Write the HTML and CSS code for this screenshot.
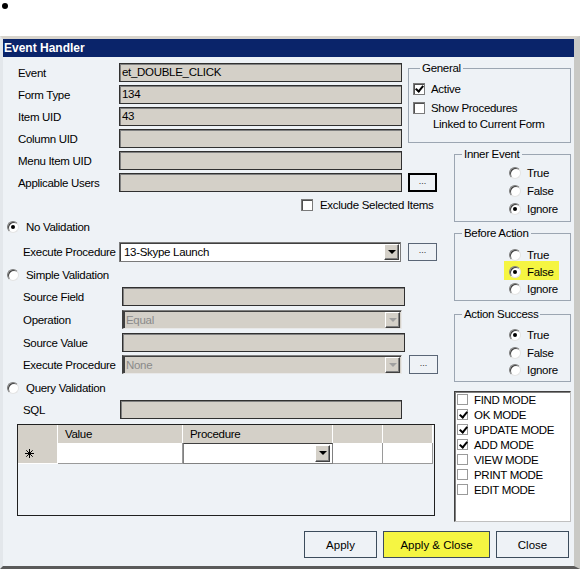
FILE: index.html
```html
<!DOCTYPE html>
<html lang="en">
<head>
    <meta charset="UTF-8">
    <title>Event Handler</title>
    <link rel="stylesheet" href="styles.css">
</head>
<body>
    <div class="dot"></div>

    <div class="window">
        <div class="title">Event Handler</div>

        <div class="content">
            <div class="columns">
                <!-- left side: event fields and validation -->
                <div class="main">
                    <div class="field"><label>Event</label><div class="box">et_DOUBLE_CLICK</div></div>
                    <div class="field"><label>Form Type</label><div class="box">134</div></div>
                    <div class="field"><label>Item UID</label><div class="box">43</div></div>
                    <div class="field"><label>Column UID</label><div class="box"></div></div>
                    <div class="field"><label>Menu Item UID</label><div class="box"></div></div>
                    <div class="field"><label>Applicable Users</label><div class="box"></div><button class="more focus">...</button></div>

                    <div class="exclude"><span class="check"></span>Exclude Selected Items</div>

                    <div class="option opt-none"><span class="radio on"></span>No Validation</div>
                    <div class="field proc"><label>Execute Procedure</label>
                        <div class="combo"><span>13-Skype Launch</span><i class="arrow"></i></div>
                        <button class="more">...</button>
                    </div>

                    <div class="option opt-simple"><span class="radio"></span>Simple Validation</div>
                    <div class="field wide f-source"><label>Source Field</label><div class="box"></div></div>
                    <div class="field wide f-op"><label>Operation</label><div class="combo off"><span>Equal</span><i class="arrow"></i></div></div>
                    <div class="field wide f-value"><label>Source Value</label><div class="box"></div></div>
                    <div class="field wide f-exec"><label>Execute Procedure</label>
                        <div class="combo off"><span>None</span><i class="arrow"></i></div>
                        <button class="more">...</button>
                    </div>

                    <div class="option opt-query"><span class="radio"></span>Query Validation</div>
                    <div class="field sql"><label>SQL</label><div class="box"></div></div>

                    <div class="grid">
                        <div class="grid-row head">
                            <div class="cell"></div>
                            <div class="cell">Value</div>
                            <div class="cell">Procedure</div>
                            <div class="cell"></div>
                            <div class="cell"></div>
                        </div>
                        <div class="grid-row">
                            <div class="cell rowhead">
                                <svg width="9" height="9" viewBox="0 0 9 9">
                                    <path d="M4.5 0V9M0 4.5H9M1.3 1.3L7.7 7.7M7.7 1.3L1.3 7.7" stroke="#000" stroke-width="1"/>
                                </svg>
                            </div>
                            <div class="cell"></div>
                            <div class="cell pick"><i class="arrow"></i></div>
                            <div class="cell"></div>
                            <div class="cell"></div>
                        </div>
                    </div>
                </div>

                <!-- right side: flags and modes -->
                <div class="side">
                    <fieldset class="group general">
                        <legend>General</legend>
                        <div class="flag flag-active"><span class="check on"></span>Active</div>
                        <div class="flag flag-show"><span class="check"></span>Show Procedures</div>
                        <div class="flag-note">Linked to Current Form</div>
                    </fieldset>

                    <fieldset class="group inner">
                        <legend>Inner Event</legend>
                        <div class="choice"><span class="radio"></span>True</div>
                        <div class="choice"><span class="radio"></span>False</div>
                        <div class="choice"><span class="radio on"></span>Ignore</div>
                    </fieldset>

                    <fieldset class="group before">
                        <legend>Before Action</legend>
                        <div class="choice"><span class="radio"></span>True</div>
                        <div class="choice"><span class="hl"><span class="radio on"></span>False</span></div>
                        <div class="choice"><span class="radio"></span>Ignore</div>
                    </fieldset>

                    <fieldset class="group success">
                        <legend>Action Success</legend>
                        <div class="choice"><span class="radio on"></span>True</div>
                        <div class="choice"><span class="radio"></span>False</div>
                        <div class="choice"><span class="radio"></span>Ignore</div>
                    </fieldset>

                    <div class="modes">
                        <div class="mode"><span class="check"></span>FIND MODE</div>
                        <div class="mode"><span class="check on"></span>OK MODE</div>
                        <div class="mode"><span class="check on"></span>UPDATE MODE</div>
                        <div class="mode"><span class="check on"></span>ADD MODE</div>
                        <div class="mode"><span class="check"></span>VIEW MODE</div>
                        <div class="mode"><span class="check"></span>PRINT MODE</div>
                        <div class="mode"><span class="check"></span>EDIT MODE</div>
                    </div>
                </div>
            </div>

            <div class="actions">
                <button class="btn">Apply</button>
                <button class="btn btn-main">Apply &amp; Close</button>
                <button class="btn">Close</button>
            </div>
        </div>
    </div>
</body>
</html>
```

FILE: styles.css
```css
* {
    box-sizing: border-box;
}

body {
    margin: 0;
    background: #fff;
    font-family: "Liberation Sans", Arial, sans-serif;
    font-size: 11.5px;
    letter-spacing: -0.3px;
    color: #000;
}

.dot {
    width: 6px;
    height: 6px;
    margin: 3px 0 0 2px;
    border-radius: 50%;
    background: #000;
}

.window {
    width: 580px;
    margin-top: 27px;
    border-top: 3px solid #d8d4cc;
    border-left: 3px solid #e3e7eb;
    border-right: 6px solid #c9c9c5;
    border-bottom: 3px solid #5a5a5a;
}

.title {
    height: 18px;
    line-height: 18px;
    padding-left: 1px;
    background: #0a246a;
    color: #fff;
    font-weight: bold;
    font-size: 12px;
    letter-spacing: 0;
}

.content {
    height: 509px;
    background: #eef2f6;
}

.columns {
    display: flex;
    height: 465px;
}

/* ---------- left column ---------- */

.main {
    width: 451px;
    padding: 6px 0 0 15px;
}

.field {
    display: flex;
    align-items: center;
    height: 19px;
}

.field + .field {
    margin-top: 3px;
}

.field label {
    width: 101px;
    white-space: nowrap;
}

.box {
    width: 283px;
    height: 19px;
    line-height: 17px;
    padding-left: 2px;
    background: #d4d0c8;
    border: 1px solid #303030;
    box-shadow: inset 1px 1px 0 #808080;
    white-space: nowrap;
}

.combo {
    display: flex;
    align-items: center;
    justify-content: space-between;
    width: 282px;
    height: 20px;
    padding: 0 1px 0 4px;
    background: #fff;
    border: 1px solid #7a7a7a;
    box-shadow: inset 1px 1px 0 #404040;
}

.combo.off {
    width: 280px;
    height: 19px;
    background: #d4d0c8;
    color: #8a8a8a;
    border-color: #808080 #e8e8e8 #e8e8e8 #404040;
    border-left-width: 2px;
    padding-left: 2px;
}

.arrow {
    position: relative;
    width: 15px;
    height: 16px;
    background: #d4d0c8;
    border: 1px solid;
    border-color: #fff #404040 #404040 #fff;
    box-shadow: inset -1px -1px 0 #808080;
}

.arrow::after {
    content: "";
    position: absolute;
    left: 3px;
    top: 5px;
    border-left: 4px solid transparent;
    border-right: 4px solid transparent;
    border-top: 4px solid #000;
}

.combo.off .arrow::after {
    border-top-color: #a0a0a0;
}

.more {
    width: 29px;
    height: 18px;
    margin-left: 7px;
    padding: 0 0 4px;
    background: #eef2f6;
    border: 1px solid #5a6676;
    font-family: "Liberation Sans", sans-serif;
    font-size: 9px;
    color: #333;
}

.more.focus {
    height: 19px;
    margin-left: 6px;
    border: 2px solid #000;
}

.exclude {
    display: flex;
    align-items: center;
    height: 13px;
    margin: 6px 0 0 283px;
    gap: 7px;
    white-space: nowrap;
}

.check {
    position: relative;
    flex: none;
    width: 12px;
    height: 12px;
    background: #fff;
    border: 1px solid #7a7a7a;
    box-shadow: inset 1px 1px 0 #505050;
}

.check.on::after {
    content: "";
    position: absolute;
    left: 3px;
    top: 0;
    width: 3px;
    height: 6px;
    border: solid #000;
    border-width: 0 2px 2px 0;
    transform: rotate(40deg);
}

.radio {
    display: inline-flex;
    align-items: center;
    justify-content: center;
    flex: none;
    width: 12px;
    height: 12px;
    border-radius: 50%;
    background: #fff;
    border: 1px solid;
    border-color: #7c7c7c #e4e4e4 #e4e4e4 #7c7c7c;
    box-shadow: inset 1px 1px 0 #404040;
}

.radio.on::after {
    content: "";
    width: 4px;
    height: 4px;
    border-radius: 50%;
    background: #000;
}

.option {
    display: flex;
    align-items: center;
    gap: 7px;
    height: 14px;
    margin-left: -11px;
}

.opt-none { margin-top: 9px; }
.proc { margin-top: 8px; height: 20px; }
.proc label { padding-left: 5px; }
.opt-simple { margin-top: 6px; }

.field.wide label {
    width: 104px;
    padding-left: 5px;
}

.field.wide .box { width: 283px; }
.f-source { margin-top: 5px; }
.field.f-op { margin-top: 4px; }
.field.f-value { margin-top: 4px; }
.field.f-exec { margin-top: 3px; }
.f-exec .more { height: 19px; }

.opt-query { margin-top: 7px; }

.sql { margin-top: 5px; }
.sql label { width: 102px; padding-left: 5px; }
.sql .box { width: 282px; }

/* ---------- grid ---------- */

.grid {
    width: 418px;
    height: 92px;
    margin: 5px 0 0 -1px;
    border: 1px solid #202020;
    background: #eef2f6;
}

.grid-row {
    display: grid;
    grid-template-columns: 40px 125px 150px 50px 50px;
}

.head .cell {
    height: 18px;
    line-height: 18px;
    padding-left: 7px;
    background: #d4d0c8;
    border-right: 1px solid #fff;
}

.grid-row:not(.head) .cell {
    height: 21px;
    background: #fff;
    border-right: 1px solid #9a9a9a;
    border-bottom: 1px solid #9a9a9a;
}

.grid-row .cell.rowhead {
    display: flex;
    align-items: center;
    padding-left: 7px;
    background: #d4d0c8;
    border-color: #fff;
}

.grid-row .cell.pick {
    display: flex;
    align-items: center;
    justify-content: flex-end;
    padding-right: 2px;
    border: 1px solid #808080;
    border-top-color: #404040;
}

.pick .arrow {
    height: 17px;
}

/* ---------- right column ---------- */

.side {
    width: 117px;
}

.group {
    margin: 0;
    padding: 0 0 0 54px;
    border: 1px solid #9ca6b2;
    min-width: 0;
}

.group legend {
    margin-left: -47px;
    padding: 0 2px;
    line-height: 14px;
    white-space: nowrap;
}

.general {
    width: 163px;
    margin: 4px 0 0 -46px;
    padding: 7px 0 11px 4px;
}

.general legend {
    margin-left: 7px;
}

.flag {
    display: flex;
    align-items: center;
    gap: 6px;
    height: 14px;
}

.flag-show { margin-top: 5px; }

.flag-note {
    margin: 2px 0 0 20px;
    line-height: 14px;
}

.choice {
    display: flex;
    align-items: center;
    height: 14px;
}

.choice .radio,
.hl .radio {
    margin-right: 6px;
}

.inner { margin-top: 4px; padding-top: 5px; padding-bottom: 5px; }
.inner .choice + .choice { margin-top: 4px; }

.before { margin-top: 4px; padding-top: 8px; padding-bottom: 4px; }
.before .choice + .choice { margin-top: 3px; }

.success { margin-top: 6px; padding-top: 7px; padding-bottom: 4px; }
.success .choice + .choice { margin-top: 3.5px; }

.hl {
    display: inline-flex;
    align-items: center;
    margin: -5px -5px -2px -5px;
    padding: 5px 5px 2px 5px;
    background: #f5f542;
}

.modes {
    height: 131px;
    margin-top: 9px;
    padding: 0 0 0 2px;
    background: #fff;
    border: 1px solid;
    border-color: #404040 #c0c0c0 #c0c0c0 #404040;
    box-shadow: inset 1px 1px 0 #808080;
}

.mode {
    display: flex;
    align-items: center;
    gap: 6px;
    height: 15px;
}

.mode .check {
    width: 11px;
    height: 11px;
    border-color: #9a9a9a;
    box-shadow: none;
}

/* ---------- buttons ---------- */

.actions {
    display: flex;
    justify-content: flex-end;
    gap: 6px;
    margin-top: 9px;
    padding-right: 5px;
}

.btn {
    width: 73px;
    height: 27px;
    background: #eef2f6;
    border: 1px solid #3c4c5c;
    font: inherit;
    color: #000;
}

.btn-main {
    width: 107px;
    background: #f5f542;
}
```
